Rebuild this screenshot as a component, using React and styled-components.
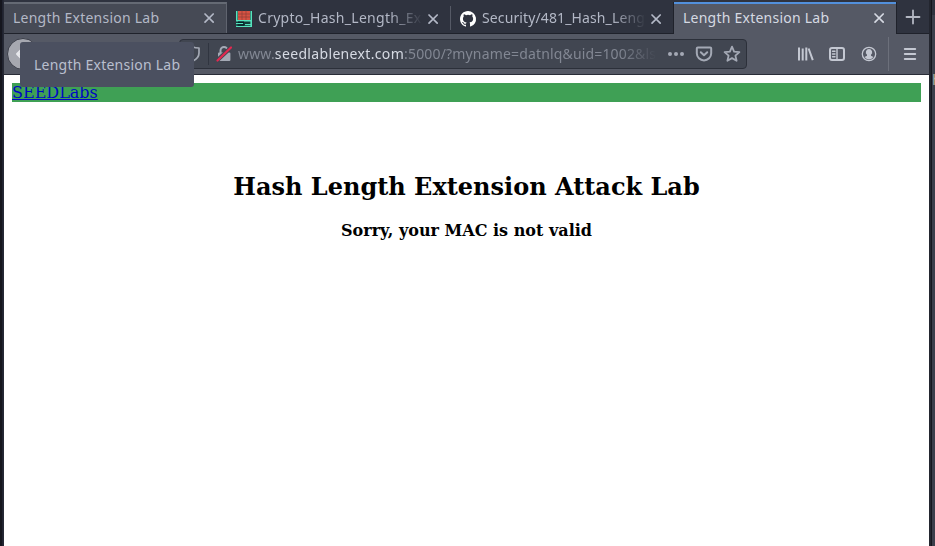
import React from "react";
import styled, { createGlobalStyle } from "styled-components";

const Global = createGlobalStyle`
  * { box-sizing: border-box; }
  body { margin: 0; background: #242832; overflow: hidden; }
`;

const Desktop = styled.div`
  position: relative;
  display: grid;
  grid-template-columns: 3px 1fr 6px;
  width: 935px;
  height: 546px;
  overflow: hidden;
  font-family: "Noto Sans", "Open Sans", sans-serif;
`;

const LeftEdge = styled.div`
  background: #15161e;
  border-right: 1px solid #202330;
`;

const RightEdge = styled.div`
  display: flex;
  background: #23262f;
  padding-left: 2px;
`;

const Neighbour = styled.div`
  width: 4px;
  padding-top: 15px;
  border-left: 1px solid #15171e;
  background: linear-gradient(#2f333f 0 15px, #3b3f4b 15px);
  overflow: hidden;
`;

const NeighbourText = styled.div`
  margin-top: 57px;
  font: 14px/16px "DejaVu Sans Mono", monospace;
  color: #b9b6a8;
`;

const BrowserWindow = styled.div`
  display: flex;
  flex-direction: column;
  min-width: 0;
  border-left: 1px solid #262934;
`;

const TabStrip = styled.div`
  display: flex;
  height: 34px;
  padding-top: 2px;
  background: #2f333f;
  box-shadow: inset 0 -1px #1f222b;
`;

const Tab = styled.div`
  display: flex;
  align-items: center;
  width: ${(p) => p.$width}px;
  height: ${(p) => (p.$kind === "active" ? 32 : 31)}px;
  padding: ${(p) => (p.$kind === "plain" ? "0 11px 0 9px" : "0 11px 2px 9px")};
  border-top: 2px solid ${(p) => ({ active: "#5290dc", hover: "#656a74", plain: "transparent" })[p.$kind]};
  background: ${(p) => ({ active: "#555965", hover: "#464a55", plain: "transparent" })[p.$kind]};
  color: ${(p) => (p.$kind === "active" ? "#d5d9e2" : "#b3b8c6")};
  border-right: ${(p) => (p.$kind === "hover" ? "1px solid #60646f" : "0")};
`;

const TabTitle = styled.div`
  flex: 1;
  min-width: 0;
  margin-left: ${(p) => (p.$icon ? 6 : 0)}px;
  margin-top: ${(p) => (p.$icon ? -1 : 0)}px;
  overflow: hidden;
  white-space: nowrap;
  font-size: 14px;
  line-height: 22px;
  letter-spacing: ${(p) => p.$spacing}px;
  mask-image: ${(p) => (p.$icon ? "linear-gradient(90deg, #000 calc(100% - 38px), transparent calc(100% - 4px))" : "none")};
`;

const Separator = styled.div`
  width: 1px;
  height: ${(p) => p.$height}px;
  margin-top: ${(p) => p.$top || 0}px;
  background: ${(p) => p.$color};
`;

const NewTab = styled.div`
  display: flex;
  flex: 1;
  justify-content: center;
  padding-top: 7px;
  border-left: 1px solid #1f222b;
  color: #b3b7c2;
`;

const Toolbar = styled.div`
  display: flex;
  align-items: center;
  height: 41px;
  padding: 0 11px 0 3px;
  background: #555965;
  border-bottom: 1px solid #292c37;
  color: #c4c8d2;
`;

const BackButton = styled.div`
  display: grid;
  place-items: center;
  width: 32px;
  height: 32px;
  border: 1px solid #3b3e49;
  border-radius: 50%;
  background: #a6a8b0;
  color: #e7e8ec;
`;

const AddressBar = styled.div`
  display: flex;
  align-items: center;
  width: 568px;
  height: 30px;
  margin-left: 140px;
  padding: 0 5px;
  border: 1px solid #2c303a;
  border-radius: 4px;
  background: #414651;
  color: #a4a9b5;
`;

const IdentityIcons = styled.div`
  display: flex;
  align-items: center;
  gap: 7px;
`;

const Url = styled.div`
  width: 422px;
  margin: 0 8px 0 6px;
  overflow: hidden;
  white-space: nowrap;
  color: #828793;
  font-size: 14px;
  line-height: 24px;
  letter-spacing: 0.16px;
  mask-image: linear-gradient(90deg, #000 calc(100% - 40px), transparent calc(100% - 2px));
`;

const Host = styled.span`
  color: #d6dae3;
  letter-spacing: 0.34px;
`;

const AddressActions = styled.div`
  display: flex;
  align-items: center;
  gap: 10px;
`;

const ToolButtons = styled.div`
  display: flex;
  align-items: center;
  margin-left: auto;
  gap: 14px;
`;

const MenuGroup = styled.div`
  display: flex;
  align-items: center;
  gap: 13px;
  margin-left: -4px;
`;

const Page = styled.main`
  flex: 1;
  padding: 8px;
  background: #fff;
  color: #000;
  font-family: "DejaVu Serif", serif;
  text-align: center;
`;

const Banner = styled.div`
  height: 19px;
  background: #3fa055;
  text-align: left;
  font-size: 16px;
  line-height: 19px;
`;

const BrandLink = styled.a`
  color: #0008c4;
  text-decoration: underline;
`;

const Title = styled.h1`
  margin: 71px 0 0;
  font-size: 24px;
  line-height: 28px;
`;

const Message = styled.h2`
  margin: 20px 0 0;
  font-size: 16px;
  line-height: 19px;
`;

const Tooltip = styled.div`
  position: absolute;
  left: 20px;
  top: 42px;
  width: 174px;
  height: 45px;
  padding-left: 14px;
  border-radius: 3px;
  background: #4b5060;
  color: #b9bfce;
  font-size: 14px;
  line-height: 45px;
  letter-spacing: 0.24px;
  white-space: nowrap;
`;

const Icon = styled.svg`
  display: block;
  flex: none;
  overflow: visible;
  width: ${(p) => p.$size || 16}px;
  height: ${(p) => p.$size || 16}px;
  fill: ${(p) => (p.$solid ? "currentColor" : "none")};
  stroke: ${(p) => (p.$solid ? "none" : "currentColor")};
  stroke-width: 2;
  stroke-linecap: round;
  stroke-linejoin: round;
`;

const CloseIcon = () => (
  <Icon $size={12} viewBox="0 0 12 12"><path d="M2 2l8.2 8.2M10.2 2L2 10.2" strokeWidth="1.7" /></Icon>
);

const GitHubIcon = () => (
  <Icon $solid viewBox="0 0 16 16" color="#fff">
    <path d="M8 0C3.58 0 0 3.58 0 8c0 3.54 2.29 6.53 5.47 7.59.4.07.55-.17.55-.38v-1.49c-2.01.37-2.53-.49-2.69-.94-.09-.23-.48-.94-.82-1.13-.28-.15-.68-.52-.01-.53.63-.01 1.08.58 1.23.82.72 1.21 1.87.87 2.33.66.07-.52.28-.87.51-1.07-1.78-.2-3.64-.89-3.64-3.95 0-.87.31-1.59.82-2.15-.08-.2-.36-1.02.08-2.12 0 0 .67-.21 2.2.82a7.4 7.4 0 0 1 4 0c1.53-1.04 2.2-.82 2.2-.82.44 1.1.16 1.92.08 2.12.51.56.82 1.27.82 2.15 0 3.07-1.87 3.75-3.65 3.95.29.25.54.73.54 1.48v2.2c0 .21.15.46.55.38A8 8 0 0 0 8 0z" />
  </Icon>
);

const CryptoIcon = () => (
  <Icon $solid viewBox="0 0 16 16">
    <path fill="#123d3a" d="M0 0h16v16H0z" />
    <path fill="#d75243" d="M2 0h12v9H2z" />
    <path stroke="#8e3f38" strokeWidth=".7" d="M2 3h12M2 6h12M6 0v9M10 0v9" />
    <path fill="#56e3bd" d="M0 0h1.5v9H0zM14.5 0H16v9h-1.5zM0 9h16v1.6H0zM0 12h7v1.2H0zM0 14.8h16V16H0zM14.4 9H16v7h-1.6zM9 13h6v1H9z" />
    <path fill="#061c25" d="M2 10.6h6v1.4H2zM1.5 13.2h7v1.6h-7z" />
  </Icon>
);

const tabs = [
  { title: "Length Extension Lab", kind: "hover", width: 223 },
  { title: "Crypto_Hash_Length_Extension", kind: "plain", width: 223, icon: <CryptoIcon />, spacing: 0.28 },
  { title: "Security/481_Hash_Length", kind: "plain", width: 222, icon: <GitHubIcon />, spacing: 0.12 },
  { title: "Length Extension Lab", kind: "active", width: 222 },
];

export default function App() {
  return (
    <>
      <Global />
      <Desktop>
        <LeftEdge />
        <BrowserWindow>
          <TabStrip>
            {tabs.map((tab, index) => (
              <React.Fragment key={index}>
                {index === 2 && <Separator $height={24} $top={4} $color="#565a66" />}
                {index === 3 && <Separator $height={31} $color="#1f222b" />}
                <Tab $kind={tab.kind} $width={tab.width}>
                  {tab.icon}
                  <TabTitle $icon={!!tab.icon} $spacing={tab.spacing ?? 0.24}>{tab.title}</TabTitle>
                  <CloseIcon />
                </Tab>
              </React.Fragment>
            ))}
            <NewTab>
              <Icon viewBox="0 0 16 16"><path d="M8 1.5v13M1.5 8h13" strokeWidth="1.8" /></Icon>
            </NewTab>
          </TabStrip>
          <Toolbar>
            <BackButton>
              <Icon viewBox="0 0 16 16"><path d="M14 8H2m6-6L2 8l6 6" /></Icon>
            </BackButton>
            <AddressBar>
              <IdentityIcons>
                <Icon viewBox="0 0 16 16"><path d="M8 1c2 1 4 1 6 1v5c0 4-2 6-6 8-4-2-6-4-6-8V2c2 0 4 0 6-1z" strokeWidth="1.7" /></Icon>
                <Separator $height={22} $color="#303540" />
                <Icon viewBox="0 0 16 16">
                  <path d="M4.5 7V4.5a3.5 3.5 0 0 1 7 0V7" />
                  <path d="M3 7.5h10.4V14H3z" fill="currentColor" />
                  <path d="M.5 15L15 1.5" stroke="#414651" strokeWidth="4" />
                  <path d="M1.5 14.5L15 1.5" stroke="#e22850" strokeWidth="2.2" />
                </Icon>
              </IdentityIcons>
              <Url>www.<Host>seedlablenext.com</Host>:5000/?myname=datnlq&amp;uid=1002&amp;ls</Url>
              <AddressActions>
                <Icon $solid $size={18} viewBox="0 0 18 18"><circle cx="3" cy="9" r="2" /><circle cx="9" cy="9" r="2" /><circle cx="15" cy="9" r="2" /></Icon>
                <Icon $size={18} viewBox="0 0 18 18"><path d="M2.8 2.5h12.4q1 0 1 1v4.7a7.2 7.2 0 0 1-14.4 0V3.5q0-1 1-1zM5.8 7.2L9 10.2l3.2-3" /></Icon>
                <Icon $size={18} viewBox="0 0 18 18"><path d="M9 1.7l2.1 4.9 5.3.5-4 3.5 1.2 5.2L9 13.1l-4.6 2.7 1.2-5.2-4-3.5 5.3-.5z" strokeWidth="1.8" /></Icon>
              </AddressActions>
            </AddressBar>
            <ToolButtons>
              <Icon $size={18} viewBox="0 0 18 18"><path d="M3 2.5v13M6.7 3.5v12M10.3 2.5v13M12.6 3.5l4.2 11.7" strokeLinecap="butt" strokeWidth="2" /></Icon>
              <Icon $size={18} viewBox="0 0 18 18"><rect x="2" y="3" width="14" height="12" rx="2" /><path d="M9 3v12M4.5 6.2H7M4.5 9H7M4.5 11.8H7" strokeWidth="1.4" /></Icon>
              <Icon $size={18} viewBox="0 0 18 18"><circle cx="9" cy="9" r="6.7" strokeWidth="1.3" /><path fill="currentColor" stroke="none" d="M9 4a3.2 3.2 0 0 1 2 5.7v1l2.5 1.2A5.4 5.4 0 0 1 9 14.4a5.4 5.4 0 0 1-4.5-2.5L7 10.7v-1A3.2 3.2 0 0 1 9 4z" /></Icon>
              <MenuGroup>
                <Separator $height={34} $color="#6c707b" />
                <Icon viewBox="0 0 16 16"><path d="M2.8 3h10.4M2.8 8h10.4M2.8 13h10.4" strokeWidth="2" /></Icon>
              </MenuGroup>
            </ToolButtons>
          </Toolbar>
          <Page>
            <Banner><BrandLink>SEEDLabs</BrandLink></Banner>
            <Title>Hash Length Extension Attack Lab</Title>
            <Message>Sorry, your MAC is not valid</Message>
          </Page>
        </BrowserWindow>
        <RightEdge><Neighbour><NeighbourText>h</NeighbourText></Neighbour></RightEdge>
        <Tooltip>Length Extension Lab</Tooltip>
      </Desktop>
    </>
  );
}
